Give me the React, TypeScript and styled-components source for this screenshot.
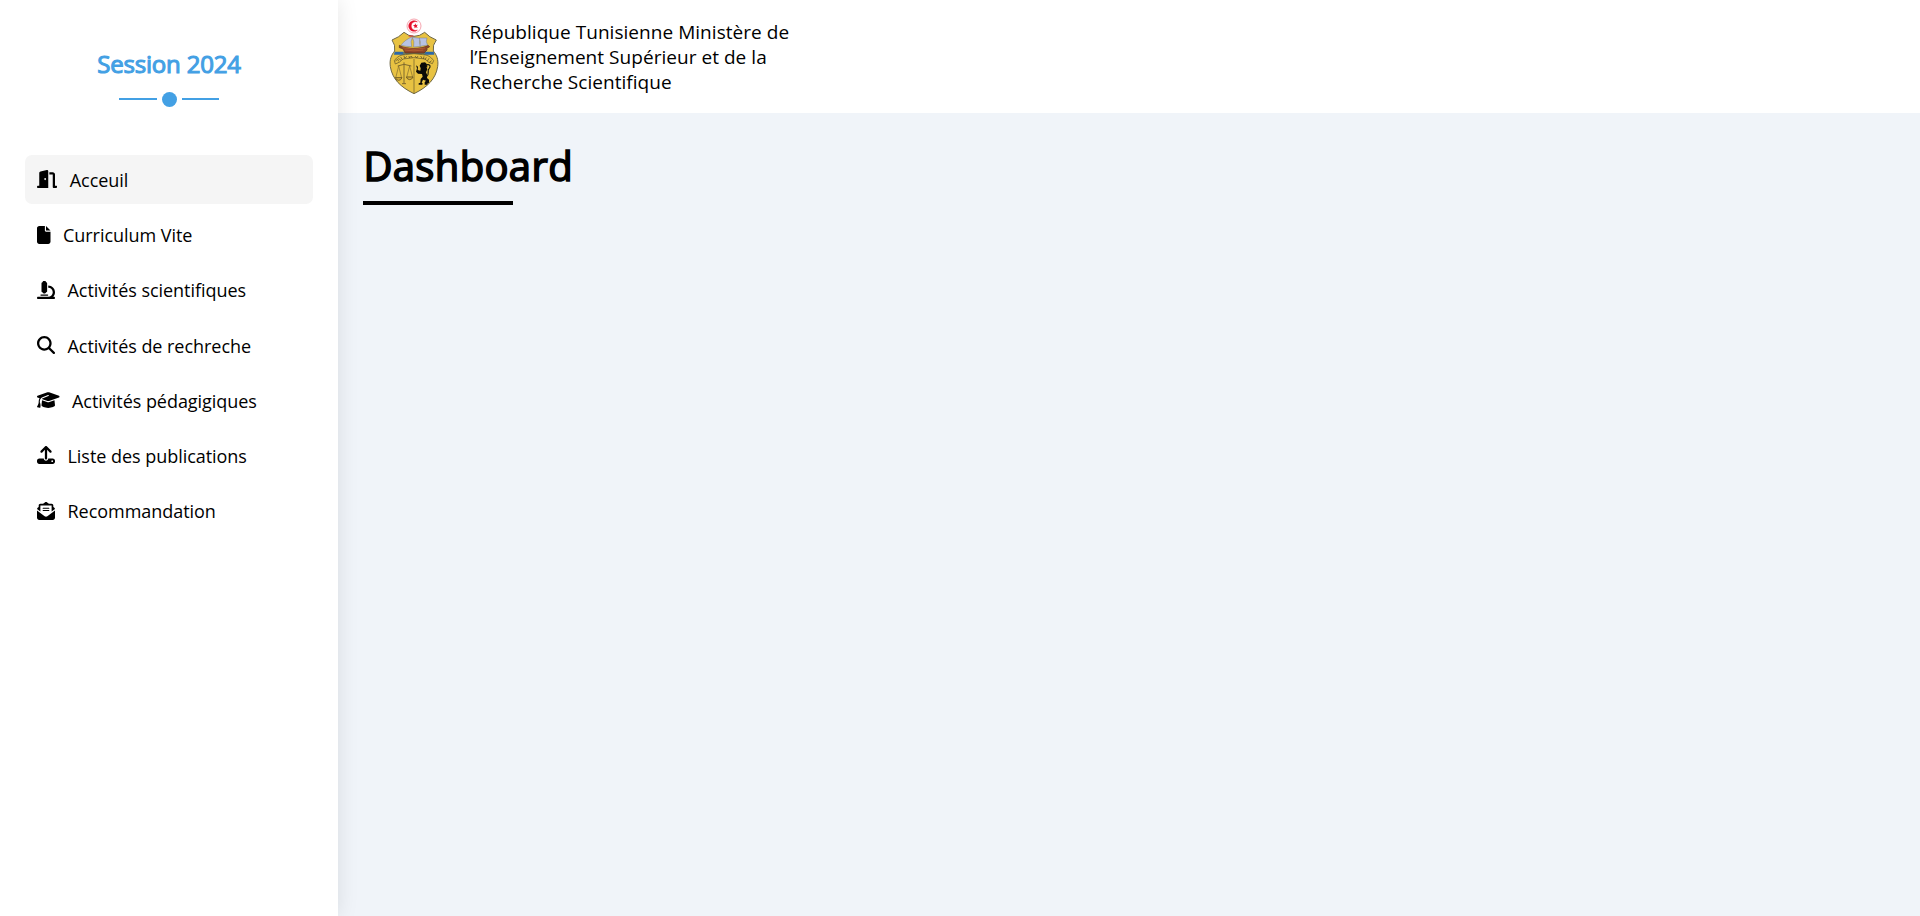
import React from "react";
import styled, { createGlobalStyle } from "styled-components";
import type { IconType } from "react-icons";
import {
  FaDoorOpen,
  FaEnvelopeOpenText,
  FaFile,
  FaGraduationCap,
  FaMagnifyingGlass,
  FaMicroscope,
  FaUpload,
} from "react-icons/fa6";

const GlobalStyle = createGlobalStyle`
  * { box-sizing: border-box; }
  body {
    margin: 0;
    background: #f0f4f9;
    color: #000;
    font-family: "Open Sans", "Noto Sans", sans-serif;
    overflow: hidden;
  }
`;

const Page = styled.div`
  display: flex;
  height: 100vh;
`;

const Sidebar = styled.aside`
  position: relative;
  z-index: 1;
  flex: 0 0 338px;
  padding: 45px 25px 0;
  background: #fff;
  box-shadow: 0 0 20px rgba(0, 0, 0, 0.1);
`;

const Session = styled.h2`
  margin: 0;
  font-size: 24px;
  font-weight: 400;
  line-height: 38px;
  letter-spacing: -0.2px;
  text-align: center;
  color: #43a0e4;
  -webkit-text-stroke: 1.1px #43a0e4;
`;

const Divider = styled.div`
  display: flex;
  align-items: center;
  justify-content: center;
  gap: 5px;
  height: 16px;
  margin: 8px 0 48.45px;
`;

const Line = styled.span`
  width: 37.5px;
  height: 2px;
  margin-bottom: 1px;
  background: #43a0e4;
`;

const Dot = styled.span`
  width: 15px;
  height: 15px;
  border-radius: 50%;
  background: #43a0e4;
`;

const Menu = styled.nav`
  display: flex;
  flex-direction: column;
  gap: 6.2px;
`;

const MenuItem = styled.a<{ $active?: boolean }>`
  display: flex;
  align-items: center;
  gap: 12.5px;
  height: 49px;
  padding: 0 12px;
  border-radius: 7px;
  background: ${({ $active }) => ($active ? "#f5f5f5" : "transparent")};
  font-size: 18px;
  letter-spacing: -0.04px;
  white-space: nowrap;
`;

const IconBox = styled.span<{ $width: number }>`
  display: flex;
  width: ${({ $width }) => $width}px;
  margin-top: -1px;

  svg {
    width: 100%;
    height: 18px;
  }
`;

const Main = styled.main`
  flex: 1;
`;

const Header = styled.header`
  display: flex;
  align-items: center;
  height: 113px;
  padding-left: 47px;
  background: #fff;
`;

const Ministry = styled.p`
  width: 340px;
  margin: 1px 0 0 28.5px;
  font-size: 19px;
  line-height: 25px;
  letter-spacing: 0.04px;
`;

const Content = styled.section`
  padding: 24px 25px;
`;

const Title = styled.h1`
  width: fit-content;
  margin: 0;
  font-size: 40px;
  font-weight: 400;
  line-height: 57px;
  letter-spacing: 0.35px;
  text-indent: 0.4px;
  -webkit-text-stroke: 1.6px #000;
`;

const Underline = styled.div`
  width: 150px;
  height: 4px;
  margin-top: 7px;
  background: #000;
`;

const EmblemArt = styled.svg`
  flex: none;
  width: 56px;
  height: 80px;
  margin-bottom: 3px;
`;

const Emblem = () => (
  <EmblemArt viewBox="0 0 168 240" fill="none">
    <circle cx="87" cy="33" r="21" fill="#fff" stroke="#f4939f" strokeWidth="2.5" />
    <path d="M97 20.5A16 16 0 1 0 97 45.500A13.500 13.500 0 1 1 97 20.500Z" fill="#e4102c" stroke="#e4102c" strokeWidth="1.5" />
    <path d="M91 25l2 5 6-1-4 4 3 6-5-2-5 3 1-5-5-4 5-1z" fill="#e4102c" />
    <path
      d="M57 52Q42 67 21 75Q32 90 29 108C19 120 13 134 16 155C22 192 46 216 87 236C128 216 152 192 158 155C161 134 155 120 145 108Q142 90 154 75Q133 67 119 52Q104 64 87 64Q71 64 57 52Z"
      fill="#e8c242"
      stroke="#6d6747"
      strokeWidth="3"
    />
    <path d="M29 110h30v9H27zM116 110h30l2 9h-32z" fill="#2c68a9" />
    <path d="M54 111h67v7H54z" fill="#6b7860" />
    <path d="M43 91c12 7 28 9 43 9 18 0 34-3 43-9l5 4-11 7 4 2-10 10H61l-8-13-10-3z" fill="#8e4429" stroke="#54301f" strokeWidth="2" />
    <path d="M53 98q33 9 67 1M59 105q28 5 56 0" stroke="#c66a35" strokeWidth="2" />
    <path d="M48 91Q59 74 83 65Q75 79 80 95Q64 95 48 91Z" fill="#b7c2e3" stroke="#737c98" strokeWidth="1.5" />
    <path d="M82 67l24 3q-6 12 1 24l-21 2q3-17-4-29z" fill="#b7c2e3" stroke="#737c98" strokeWidth="1.5" />
    <path d="M103 69h23q-5 12 2 21l-23 4q3-14-2-25z" fill="#b7c2e3" stroke="#737c98" strokeWidth="1.5" />
    <path d="M71 63h14" stroke="#d92d35" strokeWidth="3" />
    <path d="M28 137q12-18 33-18 26-6 52 0 21 0 33 18l-4 9-12-5-10-9q-33-8-66 0l-10 9-13 6z" fill="#e8c242" stroke="#5b5028" strokeWidth="2" />
    <path d="M31 138l7-5 3 6M40 130l8 6M47 126l5 8M57 123l2 7 7-6M72 123l1 6 6-6 3 6M90 123l5 6 4-6M107 123l4 7M117 124l-2 8M124 127l-4 7M132 130l-5 8M140 137l-7 5" stroke="#4d4422" strokeWidth="2" />
    <path d="M87 132v102" stroke="#7f6c31" strokeWidth="2.5" />
    <path d="M57 142v64M38 153l19-5 22 5M51 206h12" stroke="#806a2d" strokeWidth="3" />
    <path d="M41 153l-9 36h18zM74 153l-9 34h18z" stroke="#806a2d" strokeWidth="2" />
    <path d="M31 188h20q-3 8-10 8t-10-8zM64 186h20q-3 8-10 8t-10-8z" fill="#d8af38" stroke="#675420" strokeWidth="2.5" />
    <path
      d="M93 151l6 4-1 10 8 2 1-7-3-8 5-9 11-1 6 6-2 7 3 8-4 9 4 9-1 8 6 5 0 9-6 4 2 2h-9v-7l4-5-9-3-4 9 3 2-1 4h-11v-4l5-2 1-11 6-7-2-8-12-1-6-6 3-10z"
      fill="#0a0a08"
    />
    <path d="M125 184c10-5 0-17 7-23 6-6 3-13-4-12-5 1-5 6-1 7" stroke="#16150c" strokeWidth="3.5" />
  </EmblemArt>
);

const items: { label: string; icon: IconType; width: number }[] = [
  { label: "Acceuil", icon: FaDoorOpen, width: 20.25 },
  { label: "Curriculum Vite", icon: FaFile, width: 13.5 },
  { label: "Activités scientifiques", icon: FaMicroscope, width: 18 },
  { label: "Activités de rechreche", icon: FaMagnifyingGlass, width: 18 },
  { label: "Activités pédagigiques", icon: FaGraduationCap, width: 22.5 },
  { label: "Liste des publications", icon: FaUpload, width: 18 },
  { label: "Recommandation", icon: FaEnvelopeOpenText, width: 18 },
];

export default function App() {
  return (
    <Page>
      <GlobalStyle />
      <Sidebar>
        <Session>Session 2024</Session>
        <Divider>
          <Line />
          <Dot />
          <Line />
        </Divider>
        <Menu>
          {items.map(({ label, icon: Icon, width }, index) => (
            <MenuItem key={label} $active={index === 0}>
              <IconBox $width={width}>
                <Icon />
              </IconBox>
              {label}
            </MenuItem>
          ))}
        </Menu>
      </Sidebar>
      <Main>
        <Header>
          <Emblem />
          <Ministry>République Tunisienne Ministère de l’Enseignement Supérieur et de la Recherche Scientifique</Ministry>
        </Header>
        <Content>
          <Title>Dashboard</Title>
          <Underline />
        </Content>
      </Main>
    </Page>
  );
}
